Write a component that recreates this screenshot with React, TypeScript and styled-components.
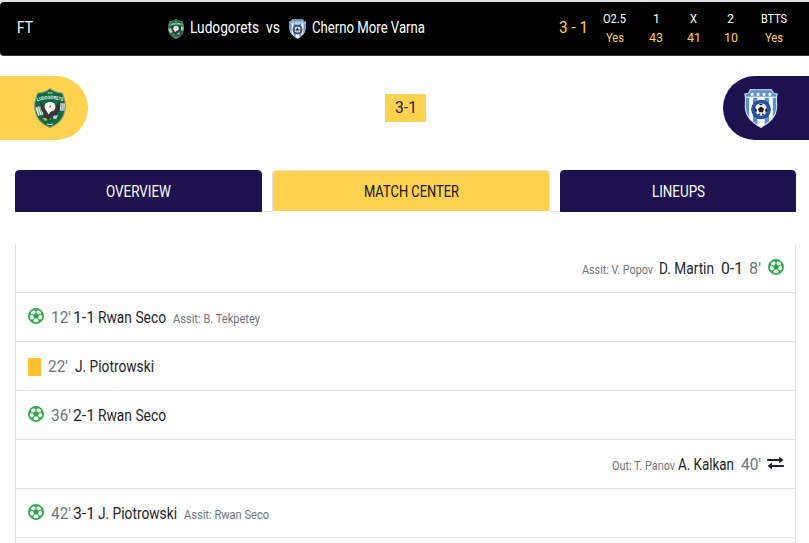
import React, { useId, useLayoutEffect, useRef, useState } from "react";
import styled, { createGlobalStyle } from "styled-components";

const navy = "#1e1150";
const gold = "#ffd24f";
const line = "#dee2e6";

const GlobalStyle = createGlobalStyle`
  *, *::before, *::after { box-sizing: border-box; }
  body {
    margin: 0;
    background: #fff;
    color: #212529;
    font-family: Roboto, "Liberation Sans", sans-serif;
    font-size: 16px;
    line-height: 24px;
    overflow: hidden;
  }
`;

/* ---------- condensed text ---------- */

type Tone = "dark" | "muted" | "light" | "gold" | "black";
const tones: Record<Tone, string> = {
  dark: "#212529",
  muted: "#6c757d",
  light: "#ffffff",
  gold: "#ffd24f",
  black: "#111111",
};

const TextBox = styled.span<{ $w: number; $gap: number; $size: number; $tone: Tone }>`
  display: inline-block;
  flex: none;
  width: ${(p) => p.$w}px;
  margin-left: ${(p) => p.$gap}px;
  font-size: ${(p) => p.$size}px;
  color: ${(p) => tones[p.$tone]};
  white-space: nowrap;
  text-align: left;
`;

const TextInner = styled.span`
  display: inline-block;
  transform-origin: 0 50%;
`;

interface CondensedProps {
  children: string;
  w: number;
  gap?: number;
  size?: number;
  tone?: Tone;
}

/* Narrows its text to the given width. */
function Condensed({ children, w, gap = 0, size = 16, tone = "dark" }: CondensedProps) {
  const ref = useRef<HTMLSpanElement>(null);
  const [scale, setScale] = useState(1);
  useLayoutEffect(() => {
    const el = ref.current;
    if (!el) return;
    el.style.transform = "none";
    const natural = el.getBoundingClientRect().width;
    const next = w / natural;
    el.style.transform = `scaleX(${next})`;
    setScale(next);
  }, [children, w, size]);
  return (
    <TextBox $w={w} $gap={gap} $size={size} $tone={tone}>
      <TextInner ref={ref} style={{ transform: `scaleX(${scale})` }}>
        {children}
      </TextInner>
    </TextBox>
  );
}

/* ---------- drawings ---------- */

const Drawing = styled.svg`
  display: block;
  flex: none;
`;

function LudogoretsCrest({ width, height }: { width: number; height: number }) {
  const arc = useId();
  return (
    <Drawing width={width} height={height} viewBox="0 0 32 40">
      <defs>
        <path id={arc} d="M3.2 13.2 Q16 9 28.8 13.2" />
      </defs>
      <path
        d="M16 .6 C19 3 24 4.8 28.6 5.2 C28.8 8 31.4 11 31.4 17 C31.4 27 27 35.5 16 39.4 C5 35.5 .6 27 .6 17 C.6 11 3.2 8 3.4 5.2 C8 4.8 13 3 16 .6Z"
        fill="#0d6b3d"
        stroke="#9c9a80"
        strokeWidth="1.1"
      />
      <path d="M1.4 19.5 L7 18 L9.5 26.5 L4 27.8Z M30.8 15.5 L25 15 L26.5 23 L30.4 22.5Z" fill="#f1f5f1" />
      <path d="M3.5 19 L6 27.4 M5.4 18.6 L8 26.7 M27 15.4 L28 22.7 M29 15.6 L29.2 22.5" stroke="#0d6b3d" strokeWidth=".6" />
      <path
        d="M6 15 C8 17 10 17.5 12 18 L20 18 C22 17 24 16 26 13.5 C27 19 25.5 23 23 26 L23.5 31 L18 29 L15 33 L12 29.5 L9 31.5 L10 26 C7 23 6 19 6 15Z"
        fill="#35353b"
      />
      <ellipse cx="16" cy="18.8" rx="5.5" ry="4.9" fill="#fafaf8" />
      <path d="M11.6 21 L14.5 26.5 L18 22Z" fill="#fafaf8" />
      <path d="M15.2 18 L17.2 17.5 L16.4 19.6Z" fill="#2d2d32" />
      <path d="M9 30 L13 31 L11.5 33Z M15.5 31.5 L17 30.5" fill="#e4c63e" stroke="#e4c63e" strokeWidth=".6" />
      <path d="M19 28 L24 27 L22.5 31 L19.5 31Z" fill="#c6c9cb" />
      <path d="M13 36 Q16 37.2 19 36" fill="none" stroke="#e9efe9" strokeWidth=".9" />
      <path d="M13.7 4.9 H18.3" stroke="#e9efe9" strokeWidth="1.1" strokeDasharray="1.2 .5" />
      <text fill="#fff" fontSize="5" fontWeight="700" fontFamily="Liberation Sans, sans-serif">
        <textPath href={`#${arc}`} textLength="26" lengthAdjust="spacingAndGlyphs">
          LUDOGORETS
        </textPath>
      </text>
    </Drawing>
  );
}

const starPath = (cx: number, cy: number, r: number) =>
  Array.from({ length: 10 }, (_, i) => {
    const a = -Math.PI / 2 + (i * Math.PI) / 5;
    const q = i % 2 ? r * 0.42 : r;
    return `${i ? "L" : "M"}${(cx + q * Math.cos(a)).toFixed(2)} ${(cy + q * Math.sin(a)).toFixed(2)}`;
  }).join(" ") + "Z";

function ChernoMoreCrest({ width, height }: { width: number; height: number }) {
  const clip = useId();
  const shield =
    "M6.3 .8 H27.7 C28 3.2 30 4.8 33.2 5 C31.8 9 33 13 32.6 19 C32 28 26.5 33.5 17 38.4 C7.5 33.5 2 28 1.4 19 C1 13 2.2 9 .8 5 C4 4.8 6 3.2 6.3 .8Z";
  return (
    <Drawing width={width} height={height} viewBox="0 0 34 39">
      <clipPath id={clip}>
        <path d={shield} />
      </clipPath>
      <path d={shield} fill="#fff" />
      <g clipPath={`url(#${clip})`} fill="#5b91c5">
        <path d="M0 0 H34 V8.3 H0Z M0 8 H5.2 V40 H0Z M9 8 H13.3 V40 H9Z M20.7 8 H25 V40 H20.7Z M28.8 8 H34 V40 H28.8Z" />
        <path d="M0 8.2 H34" stroke="#fff" strokeWidth="1" />
      </g>
      <path d={shield} fill="none" stroke="#c9e0f1" strokeWidth="1.1" />
      <path d={[8.2, 14.1, 20, 25.9].map((x) => starPath(x, 5.5, 2.6)).join(" ")} fill="#fff" />
      <circle cx="17" cy="20.5" r="9.8" fill="#1c469a" />
      <circle cx="17" cy="20.5" r="8" fill="none" stroke="#5f7dbd" strokeWidth=".8" strokeDasharray="1 1" />
      <circle cx="17" cy="20.5" r="6.2" fill="#f8f8f8" />
      <path
        d="M17 17.6 L20 19.7 L18.9 23.2 H15.1 L14 19.7Z M14.5 14.8 H19.5 L17 16.4Z M11 18.6 L13 21 L12.2 24 L10.8 21.5Z M23 18.6 L21 21 L21.8 24 L23.2 21.5Z M13.5 25.2 L15.8 24.6 L15.9 26.6Z M20.5 25.2 L18.2 24.6 L18.1 26.6Z"
        fill="#1c1c20"
      />
    </Drawing>
  );
}

function GoalIcon() {
  return (
    <Drawing width="16" height="16" viewBox="0 0 16 16">
      <circle cx="8" cy="8" r="7.1" fill="none" stroke="#28a745" strokeWidth="1.7" />
      <path d="M8 4.8 L11 7 L9.9 10.5 H6.1 L5 7Z" fill="#28a745" />
      <path
        d="M8 5 V3.2 M10.8 7 L12.7 6.3 M9.8 10.3 L11 12 M6.2 10.3 L5 12 M5.2 7 L3.3 6.3"
        stroke="#28a745"
        strokeWidth="1.1"
      />
      <path
        d="M5 1.6 L8 3.5 L11 1.6Z M13.6 3.7 L12.5 6.6 L15 8.5Z M14 11.4 L10.8 11.6 L10.2 14.6Z M2 11.4 L5.2 11.6 L5.8 14.6Z M2.4 3.7 L3.5 6.6 L1 8.5Z"
        fill="#28a745"
      />
    </Drawing>
  );
}

function SwapIcon() {
  return (
    <Drawing width="17" height="12" viewBox="0 0 17 12">
      <path d="M1 3 H13 M4 9 H16" stroke="#212529" strokeWidth="2.1" strokeLinecap="round" />
      <path
        d="M12 .7 Q12 -.3 13 .3 L15.9 2.4 Q16.6 3 15.9 3.6 L13 5.7 Q12 6.3 12 5.3Z M5 6.7 Q5 5.7 4 6.3 L1.1 8.4 Q.4 9 1.1 9.6 L4 11.7 Q5 12.3 5 11.3Z"
        fill="#212529"
      />
    </Drawing>
  );
}

/* ---------- match bar ---------- */

const Page = styled.main`
  width: 809px;
  height: 543px;
  overflow: hidden;
  background: #fff;
`;

const MatchBar = styled.header`
  display: flex;
  align-items: center;
  height: 56px;
  border-top: 2px solid ${line};
  background: #fff;
`;

const MatchBarInner = styled.div`
  display: flex;
  align-items: center;
  width: 809px;
  height: 54px;
  padding: 0 0 1px 17px;
  background: #000;
  border-bottom: 1px solid #343434;
  border-radius: 4px 0 0 4px;
`;

const Teams = styled.div`
  display: flex;
  align-items: center;
  height: 24px;
  margin-left: 135px;
  width: 391px;
`;

const CrestSlot = styled.span<{ $gap?: number }>`
  margin: 2px 0 0 ${(p) => p.$gap ?? 0}px;
`;

const Odds = styled.div`
  display: flex;
  margin: 0 0 1px 4px;
`;

const Odd = styled.div<{ $w: number }>`
  display: flex;
  flex-direction: column;
  align-items: center;
  width: ${(p) => p.$w}px;
  line-height: 19px;
`;

const odds = [
  { label: "O2.5", value: "Yes", col: 45, lw: 23, vw: 18 },
  { label: "1", value: "43", col: 38, lw: 7, vw: 14 },
  { label: "X", value: "41", col: 37, lw: 7, vw: 14 },
  { label: "2", value: "10", col: 37, lw: 7, vw: 14 },
  { label: "BTTS", value: "Yes", col: 50, lw: 26, vw: 18 },
];

/* ---------- score strip ---------- */

const ScoreStrip = styled.section`
  display: flex;
  justify-content: space-between;
  align-items: center;
  height: 64px;
  margin-top: 20px;
`;

const TeamPill = styled.div<{ $side: "home" | "away" }>`
  display: flex;
  align-items: center;
  width: ${(p) => (p.$side === "home" ? 88 : 86)}px;
  height: 64px;
  padding-left: ${(p) => (p.$side === "home" ? 34 : 21)}px;
  background: ${(p) => (p.$side === "home" ? gold : navy)};
  border-radius: ${(p) => (p.$side === "home" ? "0 32px 32px 0" : "32px 0 0 32px")};
`;

const ScoreBadge = styled.div`
  display: flex;
  justify-content: center;
  width: 41px;
  height: 28px;
  line-height: 28px;
  background: ${gold};
`;

/* ---------- tabs ---------- */

const Tabs = styled.nav`
  display: flex;
  gap: 10px;
  width: 781px;
  height: 42px;
  margin: 30px 0 0 15px;
  box-shadow: inset 0 -1px 0 ${line};
`;

const Tab = styled.button<{ $w: number; $active?: boolean }>`
  width: ${(p) => p.$w}px;
  height: 42px;
  padding: 1px 0 0;
  border: 1px solid ${(p) => (p.$active ? line : navy)};
  border-bottom-color: ${(p) => (p.$active ? "#fff" : navy)};
  border-radius: 4px 4px 0 0;
  background: ${(p) => (p.$active ? gold : navy)};
  background-clip: ${(p) => (p.$active ? "padding-box" : "border-box")};
  font: inherit;
  line-height: 24px;
`;

/* ---------- events ---------- */

const Events = styled.ul`
  list-style: none;
  width: 781px;
  margin: 32px 0 0 15px;
  padding: 0;
  border: solid ${line};
  border-width: 0 1px;
`;

const EventRow = styled.li<{ $away?: boolean }>`
  display: flex;
  align-items: center;
  justify-content: ${(p) => (p.$away ? "flex-end" : "flex-start")};
  height: 49px;
  padding: 0 ${(p) => (p.$away ? 11 : 12)}px 0 12px;
  border-bottom: 1px solid ${line};
`;

const Words = styled.span`
  display: flex;
  align-items: baseline;
  height: 26px;
  padding-top: 2px;
`;

const IconSlot = styled.span<{ $gap?: number }>`
  margin: 0 0 2px ${(p) => p.$gap ?? 0}px;
`;

const YellowCard = styled.span`
  flex: none;
  width: 13px;
  height: 18px;
  margin-top: 2px;
  background: #ffc02e;
`;

export default function App() {
  return (
    <Page>
      <GlobalStyle />
      <MatchBar>
        <MatchBarInner>
          <Condensed w={16} tone="light">FT</Condensed>
          <Teams>
            <CrestSlot><LudogoretsCrest width={16} height={20} /></CrestSlot>
            <Condensed w={69} gap={5.7} tone="light">Ludogorets</Condensed>
            <Condensed w={14} gap={7.3} tone="light">vs</Condensed>
            <CrestSlot $gap={9}><ChernoMoreCrest width={17} height={20} /></CrestSlot>
            <Condensed w={113} gap={6} tone="light">Cherno More Varna</Condensed>
          </Teams>
          <Condensed w={29} tone="gold">3 - 1</Condensed>
          <Odds>
            {odds.map((o) => (
              <Odd key={o.label} $w={o.col}>
                <Condensed w={o.lw} size={13} tone="light">{o.label}</Condensed>
                <Condensed w={o.vw} size={13} tone="gold">{o.value}</Condensed>
              </Odd>
            ))}
          </Odds>
        </MatchBarInner>
      </MatchBar>

      <ScoreStrip>
        <TeamPill $side="home"><LudogoretsCrest width={32} height={40} /></TeamPill>
        <ScoreBadge><Condensed w={22}>3-1</Condensed></ScoreBadge>
        <TeamPill $side="away"><ChernoMoreCrest width={34} height={39} /></TeamPill>
      </ScoreStrip>

      <Tabs>
        <Tab $w={247}><Condensed w={65} tone="light">OVERVIEW</Condensed></Tab>
        <Tab $w={278} $active><Condensed w={95} tone="black">MATCH CENTER</Condensed></Tab>
        <Tab $w={236}><Condensed w={53} tone="light">LINEUPS</Condensed></Tab>
      </Tabs>

      <Events>
        <EventRow $away>
          <Words>
            <Condensed w={71} size={12.5} tone="muted">Assit: V. Popov</Condensed>
            <Condensed w={55} gap={6}>D. Martin</Condensed>
            <Condensed w={22} gap={6.5}>0-1</Condensed>
            <Condensed w={12} gap={6.5} tone="muted">8′</Condensed>
          </Words>
          <IconSlot $gap={7}><GoalIcon /></IconSlot>
        </EventRow>
        <EventRow>
          <IconSlot><GoalIcon /></IconSlot>
          <Words>
            <Condensed w={20} gap={6.7} tone="muted">12′</Condensed>
            <Condensed w={22} gap={2.8}>1-1</Condensed>
            <Condensed w={68} gap={2.7}>Rwan Seco</Condensed>
            <Condensed w={87} gap={6.8} size={12.5} tone="muted">Assit: B. Tekpetey</Condensed>
          </Words>
        </EventRow>
        <EventRow>
          <YellowCard />
          <Words>
            <Condensed w={20} gap={7} tone="muted">22′</Condensed>
            <Condensed w={79} gap={7}>J. Piotrowski</Condensed>
          </Words>
        </EventRow>
        <EventRow>
          <IconSlot><GoalIcon /></IconSlot>
          <Words>
            <Condensed w={20} gap={6.7} tone="muted">36′</Condensed>
            <Condensed w={22} gap={2.6}>2-1</Condensed>
            <Condensed w={68} gap={2.3}>Rwan Seco</Condensed>
          </Words>
        </EventRow>
        <EventRow $away>
          <Words>
            <Condensed w={63} size={12.5} tone="muted">Out: T. Panov</Condensed>
            <Condensed w={56} gap={2.5}>A. Kalkan</Condensed>
            <Condensed w={20} gap={7} tone="muted">40′</Condensed>
          </Words>
          <IconSlot $gap={6.5}><SwapIcon /></IconSlot>
        </EventRow>
        <EventRow>
          <IconSlot><GoalIcon /></IconSlot>
          <Words>
            <Condensed w={20} gap={6.7} tone="muted">42′</Condensed>
            <Condensed w={22} gap={2.8}>3-1</Condensed>
            <Condensed w={79} gap={2.7}>J. Piotrowski</Condensed>
            <Condensed w={85} gap={6.8} size={12.5} tone="muted">Assit: Rwan Seco</Condensed>
          </Words>
        </EventRow>
        <EventRow />
      </Events>
    </Page>
  );
}
